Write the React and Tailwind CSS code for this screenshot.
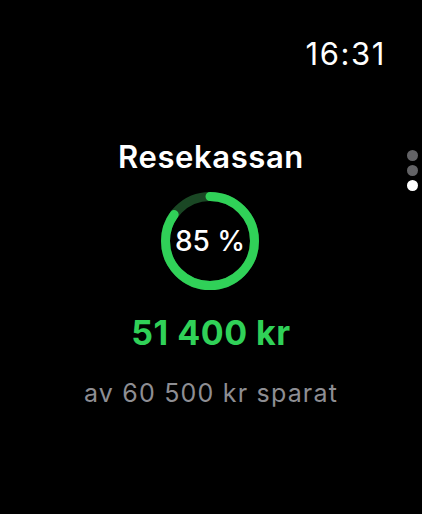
export default function App() {
  const pct = 85;
  const r = 44.5;
  const c = 2 * Math.PI * r;

  return (
    <div className="relative w-[422px] h-[514px] bg-black overflow-hidden font-['Inter','Liberation_Sans',sans-serif] text-white">
      {/* Status bar */}
      <div className="flex justify-end pr-[36px] pt-[36px]">
        <span className="text-[31px] leading-[36px] font-normal tracking-[1.6px]">16:31</span>
      </div>

      {/* Content */}
      <div className="flex flex-col items-center mt-[67px]">
        <h1 className="text-[31px] leading-[36px] font-semibold tracking-[0.6px]">Resekassan</h1>

        <div className="relative w-[98px] h-[98px] mt-[17px] -ml-[2px]">
          <svg width="98" height="98" viewBox="0 0 98 98" className="-rotate-90">
            <circle cx="49" cy="49" r={r} fill="none" stroke="#1a4724" strokeWidth="9" />
            <circle
              cx="49"
              cy="49"
              r={r}
              fill="none"
              stroke="#30d158"
              strokeWidth="9"
              strokeLinecap="round"
              strokeDasharray={`${(c * pct) / 100} ${c}`}
            />
          </svg>
          <div className="absolute inset-0 flex items-center justify-center">
            <span className="text-[28px] leading-none font-medium">85 %</span>
          </div>
        </div>

        <div className="text-[34px] leading-[40px] font-bold text-[#30d158] mt-[23px] tracking-[0.5px]">51 400 kr</div>
        <div className="text-[25px] leading-[30px] text-[#8e8e93] mt-[25px] tracking-[1.2px]">av 60 500 kr sparat</div>
      </div>

      {/* Page dots */}
      <div className="absolute right-[4px] top-[150px] flex flex-col gap-[4px]">
        <span className="w-[11px] h-[11px] rounded-full bg-[#636366]" />
        <span className="w-[11px] h-[11px] rounded-full bg-[#636366]" />
        <span className="w-[11px] h-[11px] rounded-full bg-white" />
      </div>
    </div>
  );
}
